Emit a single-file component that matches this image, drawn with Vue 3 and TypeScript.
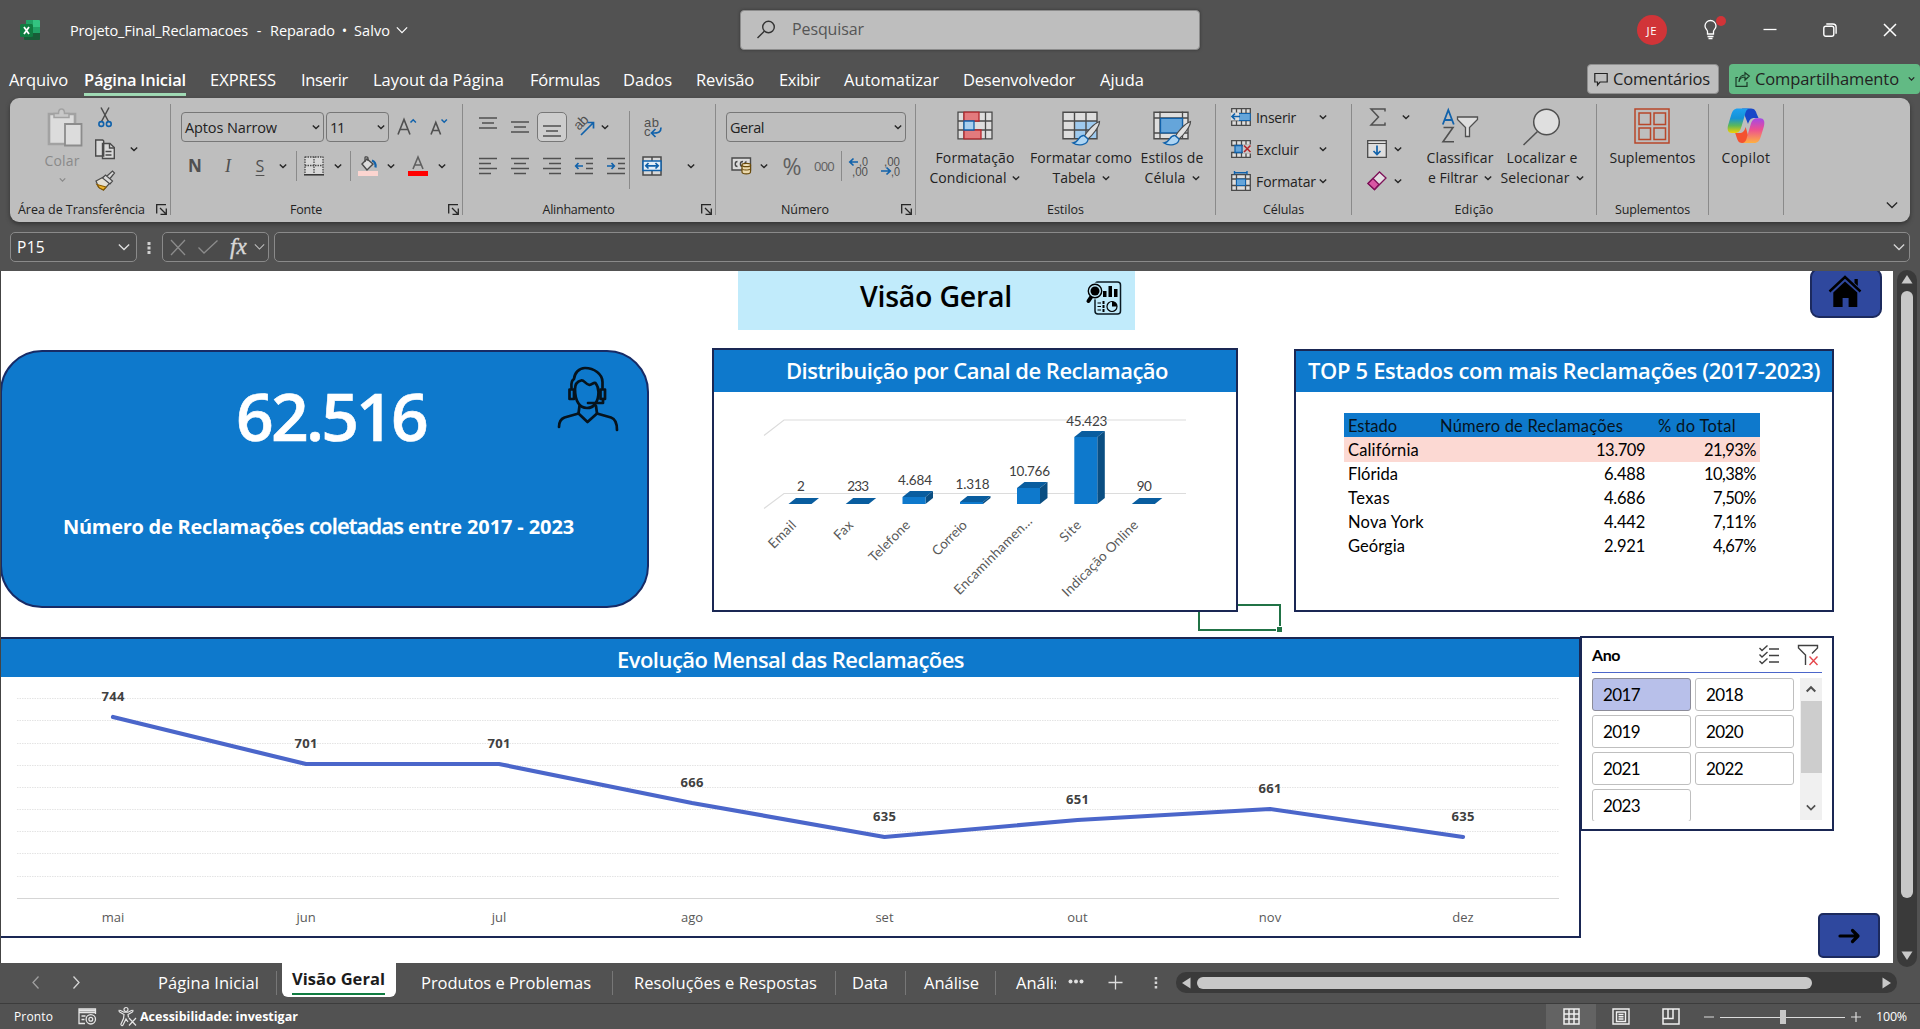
<script setup lang="ts">
import { h } from 'vue'
import type { Directive, FunctionalComponent } from 'vue'

// Tracks a label so that it takes up the given width in pixels.
const vFit: Directive<HTMLElement, number> = {
  mounted(el, { value }) {
    const count = (el.textContent ?? '').length
    const natural = el.getBoundingClientRect().width
    if (count > 1) el.style.letterSpacing = `${((value - natural) / count).toFixed(3)}px`
  },
}

const Chev: FunctionalComponent<{ w?: number; c?: string; s?: number }> = (p) => {
  const w = p.w ?? 8
  return h('svg', { width: w, height: w / 2 + 2, viewBox: `-1 -1 ${w + 2} ${w / 2 + 2}`, style: 'flex:none;display:block' }, [
    h('path', { d: `M0 0L${w / 2} ${w / 2}L${w} 0`, fill: 'none', stroke: p.c ?? '#262626', 'stroke-width': p.s ?? 1.7 }),
  ])
}
Chev.props = ['w', 'c', 's']

const Launcher: FunctionalComponent = () =>
  h('svg', { class: 'launcher', width: 11, height: 11, viewBox: '0 0 11 11' }, [
    h('path', { d: 'M.7 9.5V.7H10M4 4l5.5 5.5M10.3 4.500V10.300H4.500', fill: 'none', stroke: '#262626', 'stroke-width': 1.3 }),
  ])

interface Label { text: string; w: number }
interface Tab extends Label { gap: number; active?: boolean }
const tabs: Tab[] = [
  { text: 'Arquivo', w: 59, gap: 9 },
  { text: 'Página Inicial', w: 102, gap: 16, active: true },
  { text: 'EXPRESS', w: 66, gap: 24 },
  { text: 'Inserir', w: 47, gap: 25 },
  { text: 'Layout da Página', w: 131, gap: 25 },
  { text: 'Fórmulas', w: 70, gap: 26 },
  { text: 'Dados', w: 49, gap: 23 },
  { text: 'Revisão', w: 58, gap: 24 },
  { text: 'Exibir', w: 41, gap: 25 },
  { text: 'Automatizar', w: 95, gap: 24 },
  { text: 'Desenvolvedor', w: 112, gap: 24 },
  { text: 'Ajuda', w: 44, gap: 25 },
]

const alignRows = [
  { id: 'l', x: [0, 0, 0, 0], e: [18, 12, 18, 12] },
  { id: 'c', x: [0, 3, 0, 3], e: [18, 15, 18, 15] },
  { id: 'r', x: [0, 6, 0, 6], e: [18, 18, 18, 18] },
]

interface Bar { name: string; value: string; x: number; top: number; labelY: number; endX: number; endY: number; len: number; vw: number }
const bars: Bar[] = [
  { name: 'Email', value: '2', x: 788.5, top: 504, labelY: 491, endX: 797, endY: 526, len: 33, vw: 7 },
  { name: 'Fax', value: '233', x: 845.700, top: 504, labelY: 491, endX: 854, endY: 526, len: 21, vw: 22 },
  { name: 'Telefone', value: '4.684', x: 902.5, top: 497, labelY: 485, endX: 911, endY: 526, len: 52, vw: 34 },
  { name: 'Correio', value: '1.318', x: 960, top: 502, labelY: 489, endX: 968, endY: 526, len: 43, vw: 34 },
  { name: 'Encaminhamen...', value: '10.766', x: 1017, top: 488, labelY: 476, endX: 1033, endY: 522, len: 104, vw: 41 },
  { name: 'Site', value: '45.423', x: 1074.300, top: 437, labelY: 426, endX: 1082, endY: 526, len: 24, vw: 41 },
  { name: 'Indicação Online', value: '90', x: 1131.800, top: 504, labelY: 491, endX: 1139, endY: 526, len: 101, vw: 15 },
]

const states = [
  { n: 'Califórnia', w: 71, q: '13.709', qw: 49, p: '21,93%', pw: 52 },
  { n: 'Flórida', w: 50, q: '6.488', qw: 41, p: '10,38%', pw: 52 },
  { n: 'Texas', w: 42, q: '4.686', qw: 41, p: '7,50%', pw: 43 },
  { n: 'Nova York', w: 76, q: '4.442', qw: 41, p: '7,11%', pw: 43 },
  { n: 'Geórgia', w: 57, q: '2.921', qw: 41, p: '4,67%', pw: 43 },
]

const months = [
  { m: 'mai', v: 744, x: 113, y: 717, ly: 701 },
  { m: 'jun', v: 701, x: 306, y: 764, ly: 748 },
  { m: 'jul', v: 701, x: 499, y: 764, ly: 748 },
  { m: 'ago', v: 666, x: 692, y: 803, ly: 787 },
  { m: 'set', v: 635, x: 884.5, y: 837, ly: 821 },
  { m: 'out', v: 651, x: 1077.5, y: 820, ly: 804 },
  { m: 'nov', v: 661, x: 1270, y: 809, ly: 793 },
  { m: 'dez', v: 635, x: 1463, y: 837, ly: 821 },
]
const linePoints = months.map((p) => `${p.x},${p.y}`).join(' ')
const gridYs = [698.5, 720.5, 743.5, 765.5, 787.5, 809.5, 831.5, 853.5, 876.5]
const years = [2017, 2018, 2019, 2020, 2021, 2022, 2023]
</script>

<template>
  <div class="app">
    <header class="titlebar">
      <svg class="xl" width="20" height="20" viewBox="20 20 20 20">
        <path fill="#21a366" d="M26 20h7v7h-7z" /><path fill="#33c481" d="M33 20h6a1 1 0 011 1v6h-7z" />
        <path fill="#107c41" d="M26 27h7v6h-7z" /><path fill="#21a366" d="M33 27h7v6h-7z" />
        <path fill="#185c37" d="M24 33h16v6a1 1 0 01-1 1H25a1 1 0 01-1-1z" /><rect x="20" y="24" width="13" height="13" rx="1.500" fill="#107c41" />
        <path d="M24 27l5 7M29 27l-5 7" stroke="#fff" stroke-width="1.800" />
      </svg>
      <div class="doc">
        <span v-fit="178">Projeto_Final_Reclamacoes</span><span class="dash">-</span>
        <span v-fit="65">Reparado</span><span class="dot">•</span><span v-fit="36">Salvo</span>
        <Chev :w="12" c="#fff" :s="1.4" />
      </div>
      <div class="search">
        <svg width="19" height="19" viewBox="757 20 19 19" fill="none" stroke="#333" stroke-width="1.400"><circle cx="768.500" cy="27" r="5.800" /><path d="M764.300 31.200L757.500 38" /></svg>
        <span v-fit="72">Pesquisar</span>
      </div>
      <div class="avatar"><span v-fit="11">JE</span></div>
      <svg class="bulb" width="24" height="26" viewBox="1703 13 24 26" fill="none" stroke="#fff" stroke-width="1.300">
        <path d="M1707.500 33v-2.500c0-1.500-2.500-2.500-2.500-5.500a5.500 5.500 0 0111 0c0 3-2.500 4-2.500 5.500V33zM1707.500 35.500h6M1708.500 37.500h4" /><circle cx="1721" cy="20" r="5" fill="#d13438" stroke="none" />
      </svg>
      <div class="wins">
        <svg width="14" height="14" viewBox="0 0 14 14"><path d="M.5 6.500h13" stroke="#fff" stroke-width="1.300" /></svg>
        <svg width="14" height="14" viewBox="0 0 14 14" fill="none" stroke="#fff" stroke-width="1.400"><rect x=".8" y="3.300" width="10" height="10" rx="2" /><path d="M3.300 1h6.500a3.300 3.300 0 013.300 3.300v6.500" /></svg>
        <svg width="14" height="14" viewBox="0 0 14 14"><path d="M1 1l12 12M13 1L1 13" stroke="#fff" stroke-width="1.500" /></svg>
      </div>
    </header>

    <nav class="tabs">
      <span v-for="t in tabs" :key="t.text" class="tab" :class="{ on: t.active }" :style="{ marginLeft: t.gap + 'px', width: t.w + 'px' }"><span v-fit="t.w">{{ t.text }}</span></span>
      <button class="cbtn comments">
        <svg width="14" height="14" viewBox="0 0 14 14" fill="none" stroke="#222" stroke-width="1.200"><path d="M.8 1.500h12.400v8.500H6l-2.500 3v-3H.8z" /></svg>
        <span v-fit="97">Comentários</span>
      </button>
      <button class="cbtn share">
        <svg width="15" height="15" viewBox="0 0 15 15" fill="none" stroke="#1c3a28" stroke-width="1.200"><path d="M3 5.500H1v8.800h11V10M4 10c.5-4 3-5 6-5V8l4.300-4L10 .800V3C6 3 4 6 4 10z" /></svg>
        <span v-fit="144">Compartilhamento</span><Chev :w="7" />
      </button>
    </nav>

    <section class="ribbon">
      <div class="group clip">
        <div class="body">
          <div class="paste">
            <svg width="34" height="38" viewBox="48 108 34 38" fill="#dcdcdc" stroke="#a2a2a2" stroke-width="1.800"><path d="M49 114h26v30H49z" stroke-width="2.600" /><path d="M54 117.500v-4h4.500c0-6 6-6 6 0H69v4z" fill="#c8c8c8" stroke-width="1.500" /><path d="M65 124h16.500v21.500H65z" stroke="#8c8c8c" /></svg>
            <span v-fit="35">Colar</span><Chev :w="7" c="#8a8a8a" />
          </div>
          <div class="clipcol">
            <div class="crow"><svg width="20" height="20" viewBox="95 107 20 20" fill="none"><path d="M101 107.500l7.500 14M109 107.500l-7.500 14" stroke="#4a4a4a" stroke-width="1.500" /><g stroke="#1162ab" stroke-width="1.600"><circle cx="101.300" cy="124" r="2.400" /><circle cx="108.800" cy="124" r="2.400" /></g></svg></div>
            <div class="crow"><svg width="20" height="20" viewBox="95 139 20 20" fill="#d8d8d8" stroke="#4a4a4a" stroke-width="1.400"><path d="M95.700 140h7l1 1v15h-8zM102.500 143.500h7.500l4.300 4v11h-11.800z" /><path d="M109.500 143.500v4.500h4.500M105.500 151.500h6M105.500 155h6" fill="none" /></svg><Chev /></div>
            <div class="crow"><svg width="20" height="20" viewBox="95 171 20 20" stroke="#4a4a4a" stroke-width="1.200"><path d="M96 181l7.500-4 6 6.500-6 6.500-5-3z" fill="#e4dfd2" /><path d="M97 184.500l9 2.500-2.500 3-4-2z" fill="#efb42c" stroke="#8a5c00" /><path d="M102.500 178l3-3 7 6-2.500 3zM107 176l5.500-5 2 2-4.500 5.500" fill="#d8d8d8" /></svg></div>
          </div>
        </div>
        <footer><span v-fit="127">Área de Transferência</span><Launcher /></footer>
      </div>

      <div class="group font">
        <div class="body two">
          <div class="row f1">
            <div class="combo"><span v-fit="92">Aptos Narrow</span><Chev /></div>
            <div class="combo"><span v-fit="14">11</span><Chev /></div>
            <svg width="20" height="18" viewBox="397 116.500 20 18" fill="none"><path d="M398 133l6-15 6 15M400.200 128h7.600" stroke="#505050" stroke-width="1.600" /><path d="M410.500 121l2.700-2.700 2.700 2.700" stroke="#1162ab" stroke-width="1.500" /></svg>
            <svg width="18" height="18" viewBox="431 116.500 18 18" fill="none"><path d="M432 133l4.800-12 4.800 12M433.700 129h6.200" stroke="#505050" stroke-width="1.600" /><path d="M442.500 118l2.700 2.700 2.700-2.700" stroke="#1162ab" stroke-width="1.500" /></svg>
          </div>
          <div class="row f2">
            <b>N</b><i>I</i><u>S</u><Chev /><hr />
            <svg width="20" height="20" viewBox="0 0 20 20"><path fill="#d8d8d8" d="M1 1h18v17H1z" /><path d="M1 .500V18M10 .500V18M19 .500V18M1 1h18M1 9.500h18" stroke="#4a4a4a" stroke-width="1.300" stroke-dasharray="1.500 1" /><path d="M0 18.800h20" stroke="#333" stroke-width="1.500" /></svg>
            <Chev /><hr />
            <svg width="20" height="20" viewBox="0 0 20 20" fill="none"><path d="M4 8l5-5 6 5-6 6z" fill="#dcdcdc" stroke="#4a4a4a" stroke-width="1.400" /><path d="M7 6V1.500c0-1 3-1 3 .500v3" stroke="#4a4a4a" stroke-width="1.300" /><path d="M14 4.500c3 1 4 3 3.500 7" stroke="#1162ab" stroke-width="2.200" /><path fill="#fcd5d0" d="M0 15h20v5H0z" /></svg>
            <Chev />
            <svg width="20" height="20" viewBox="0 0 20 20"><path d="M5 13L10 1l5 12M6.700 9h6.600" fill="none" stroke="#606060" stroke-width="1.600" /><path fill="#f00" d="M0 15h20v5H0z" /></svg>
            <Chev />
          </div>
        </div>
        <footer class="l"><span v-fit="32">Fonte</span><Launcher /></footer>
      </div>

      <div class="group align">
        <div class="body">
          <div class="al">
            <div class="row a1">
              <svg class="up" width="18" height="13" viewBox="0 0 18 13"><path d="M0 1h18M3 6h12M0 11h18" /></svg>
              <svg width="18" height="13" viewBox="0 0 18 13"><path d="M0 1h18M3 6h12M0 11h18" /></svg>
              <div class="pressed"><svg width="18" height="13" viewBox="0 0 18 13"><path d="M0 1h18M3 6h12M0 11h18" /></svg></div>
              <svg width="20" height="20" viewBox="574 117 20 20"><text x="579" y="131" font-size="14" transform="rotate(-45 579 131)" textLength="15" class="gl">ab</text><path d="M581 135l12-12M587.500 122.500h6v6" class="bl" /></svg>
              <Chev />
            </div>
            <div class="row a2">
              <svg v-for="a in alignRows" :key="a.id" width="18" height="18" viewBox="0 0 18 18"><path v-for="(s, i) in a.x" :key="i" :d="`M${s} ${1.500 + i * 5}H${a.e[i]}`" /></svg>
              <svg width="18" height="18" viewBox="0 0 18 18"><path d="M0 1.500h18M11 6.500h7M11 11.500h7M0 16.500h18" /><path d="M8 9H1M3.500 6L.7 9l2.800 3" class="bl" /></svg>
              <svg width="18" height="18" viewBox="0 0 18 18"><path d="M0 1.500h18M11 6.500h7M11 11.500h7M0 16.500h18" /><path d="M0 9h7M4.500 6l2.800 3-2.800 3" class="bl" /></svg>
            </div>
          </div>
          <div class="ar">
            <div class="row a3"><svg width="20" height="22" viewBox="653 116 20 22"><text x="655" y="127" font-size="13" textLength="15" class="gl">ab</text><text x="655" y="136" font-size="13" class="gl">c</text><path d="M672 127.500c0 4.500-2 5.500-9 5.500M666.500 129l-4 4 4 4" class="bl" /></svg></div>
            <div class="row a3"><svg width="20" height="20" viewBox="0 0 20 20"><path d="M1 1h18v18H1zM10 1v4M10 15v4" fill="#d8d8d8" stroke="#4a4a4a" stroke-width="1.500" /><path d="M1 5h18v9.500H1z" fill="#e4eef6" stroke="#1162ab" stroke-width="1.500" /><path d="M4 9.800h12M6.500 7L3.800 9.800l2.700 2.700M13.500 7l2.700 2.800-2.700 2.700" class="bl" /></svg><Chev /></div>
          </div>
        </div>
        <footer class="l"><span v-fit="72">Alinhamento</span><Launcher /></footer>
      </div>

      <div class="group num">
        <div class="body two">
          <div class="combo"><span v-fit="34">Geral</span><Chev /></div>
          <div class="row n2">
            <svg width="21" height="18" viewBox="731 160 21 18"><path d="M732 161h18.500v12H732z" fill="#dcdcdc" stroke="#4a4a4a" stroke-width="1.400" /><path d="M737.500 164.500c-3 0-3 5 0 5M743 164.500c-3.500 0-3.500 5 0 5M746.500 164.500c-2.500 1-2 4-1 5" fill="none" stroke="#4a4a4a" stroke-width="1.400" /><path d="M742 168v7c0 2.500 8.500 2.500 8.500 0v-7" fill="#ebd9ad" stroke="#6a4b0b" stroke-width="1.200" /><ellipse cx="746.300" cy="168" rx="4.300" ry="1.700" fill="#f0e2be" stroke="#6a4b0b" stroke-width="1.200" /><path d="M742 171.500c0 2 8.500 2 8.500 0" fill="none" stroke="#6a4b0b" /></svg>
            <Chev /><span class="pct">%</span><span class="zeros" v-fit="20">000</span><hr />
            <svg width="20" height="20" viewBox="849 156 20 20"><text x="859" y="165.500" font-size="12" textLength="9" lengthAdjust="spacingAndGlyphs" class="gl">,0</text><text x="852" y="175.500" font-size="12" textLength="16" lengthAdjust="spacingAndGlyphs" class="gl">,00</text><path d="M858 162h-8M853.500 158.500l-3.700 3.500 3.700 3.500" class="bl" /></svg>
            <svg width="20" height="20" viewBox="881 156 20 20"><text x="884" y="165.500" font-size="12" textLength="16" lengthAdjust="spacingAndGlyphs" class="gl">,00</text><text x="891" y="175.500" font-size="12" textLength="9" lengthAdjust="spacingAndGlyphs" class="gl">,0</text><path d="M881 171h9M886.500 167.500l3.700 3.500-3.700 3.500" class="bl" /></svg>
          </div>
        </div>
        <footer class="l"><span v-fit="48">Número</span><Launcher /></footer>
      </div>

      <div class="group styles">
        <div class="body">
          <div class="big b1">
            <svg width="36" height="29" viewBox="957.500 111.500 36 29"><path d="M958.500 112.700h34v26.600h-34z" fill="#dedede" /><path d="M958.500 112.700h34v26.600h-34zM958.500 121.500h34M958.500 130.500h34M964.500 112v27M986 112v27" fill="none" stroke="#4a4a4a" stroke-width="1.300" /><path d="M964.500 112.700h15v8.800h-15zM964.500 130.500h17v8.800h-17z" fill="#e37a7d" stroke="#b5282e" stroke-width="1.300" /><path d="M964.500 121.500h10v9h-10z" fill="#aacfee" stroke="#1162ab" stroke-width="1.300" /></svg>
            <span v-fit="79">Formatação</span><p><span v-fit="77">Condicional</span><Chev /></p>
          </div>
          <div class="big b2">
            <svg width="39" height="36" viewBox="1063 111.500 39 36"><path d="M1064 112.700h34v26.600h-34z" fill="#dedede" /><path d="M1076 121.500h22v18h-22z" fill="#9fcaee" /><path d="M1064 112.700h34v26.600h-34zM1064 121.500h34M1064 130.500h34M1075.500 112v27M1087 112v27" fill="none" stroke="#4a4a4a" stroke-width="1.400" /><path d="M1100.500 122c-6 2-13 11-15 14.500l3.500 3c4-3.500 11.500-12 11.500-17.500z" fill="#dedede" stroke="#4a4a4a" stroke-width="1.200" /><path d="M1085 136c-6-.500-4.500 7-11 7.500 5 3.500 15 2 15-4z" fill="#aed5f3" stroke="#1162ab" stroke-width="1.300" /></svg>
            <span v-fit="102">Formatar como</span><p><span v-fit="43">Tabela</span><Chev /></p>
          </div>
          <div class="big b3">
            <svg width="39" height="36" viewBox="1153 111.500 39 36"><path d="M1154 112.700h34v26.600h-34z" fill="#dedede" stroke="#4a4a4a" stroke-width="1.400" /><path d="M1154 118.500h34M1160 112v27M1182.500 112v27M1154 133.500h34" stroke="#4a4a4a" stroke-width="1.300" /><path d="M1160.500 118.800h22v14.500h-22z" fill="#65a5da" stroke="#1162ab" stroke-width="1.300" /><path d="M1190.500 122c-6 2-13 11-15 14.500l3.500 3c4-3.500 11.500-12 11.500-17.500z" fill="#dedede" stroke="#4a4a4a" stroke-width="1.200" /><path d="M1175 136c-6-.500-4.500 7-11 7.500 5 3.500 15 2 15-4z" fill="#aed5f3" stroke="#1162ab" stroke-width="1.300" /></svg>
            <span v-fit="63">Estilos de</span><p><span v-fit="41">Célula</span><Chev /></p>
          </div>
        </div>
        <footer><span v-fit="37">Estilos</span></footer>
      </div>

      <div class="group cells">
        <div class="rows">
          <div class="crow"><svg width="20" height="18" viewBox="0 0 20 18"><path d="M.7.7h18.600v16.600H.7zM.7 5.500h18.600M.7 12.500h18.600M5.500.7v16.600M10.500.7v16.600M15 .7v16.600" fill="#dedede" stroke="#4a4a4a" stroke-width="1.300" /><path d="M7 5.500h12.300v7H7z" fill="#65a5da" stroke="#1162ab" /><path d="M0 4.500h8v8H0z" fill="#dedede" /><path d="M9 8.500H1M4 5.500l-3 3 3 3" class="bl" /></svg><span v-fit="40">Inserir</span><Chev /></div>
          <div class="crow"><svg width="20" height="18" viewBox="0 0 20 18"><path d="M.7.7h18.600v4.800H.7zM.7 12.500h18.600v4.800H.7zM5.500.7v16.600M10.500.7v16.600M15 .7v16.600" fill="#dedede" stroke="#4a4a4a" stroke-width="1.300" /><path d="M4 5.500h7v7H4z" fill="#65a5da" stroke="#1162ab" stroke-width="1.300" /><path d="M12 4.500h8v9h-8z" fill="#c6c6c6" /><path d="M13 5.500l6.500 6.500M19.500 5.500L13 12" stroke="#b3262b" stroke-width="1.600" /></svg><span v-fit="43">Excluir</span><Chev /></div>
          <div class="crow"><svg width="20" height="20" viewBox="0 0 20 20"><path d="M.7 3.700h18.600v15.600H.7zM.7 8h18.600M.7 14.500h18.600M5.500 3.700v15.600M14.500 3.700v15.600" fill="#dedede" stroke="#4a4a4a" stroke-width="1.300" /><path d="M5.500 8h9v6.500h-9z" fill="#65a5da" stroke="#1162ab" /><path d="M3.500 0v3.500M16 0v3.500M3.500 1.700H16" stroke="#1162ab" stroke-width="1.400" /></svg><span v-fit="60">Formatar</span><Chev /></div>
        </div>
        <footer><span v-fit="41">Células</span></footer>
      </div>

      <div class="group edit">
        <div class="body">
          <div class="rows">
            <div class="crow first"><svg width="18" height="18" viewBox="0 0 18 18"><path d="M16 3.500V1H2l7.500 8L2 17h14v-2.500" fill="none" stroke="#505050" stroke-width="1.500" /></svg><Chev /></div>
            <div class="crow"><svg width="20" height="18" viewBox="0 0 20 18"><path d="M.7.700h18.600v16.600H.7z" fill="#dedede" stroke="#4a4a4a" stroke-width="1.300" /><path d="M.7 3.500h18.600" stroke="#4a4a4a" /><path d="M10 5.500v9M6.500 11l3.500 3.500 3.500-3.500" class="bl" /></svg><Chev /></div>
            <div class="crow"><svg width="20" height="20" viewBox="0 0 20 20" stroke="#7d1058" stroke-width="1.300"><path d="M1 12.500L12.500 1l6.500 6L7.500 18.500z" fill="#e4dfe3" /><path d="M1 12.500l5-5 6 6-4.500 5z" fill="#d957a4" /></svg><Chev /></div>
          </div>
          <div class="big e1">
            <svg width="36" height="36" viewBox="1442 108.500 36 36"><path d="M1442.800 125l5.500-14.500 5.500 14.500M1444.700 120.500h7.200" fill="none" stroke="#1162ab" stroke-width="1.800" /><path d="M1443.500 128h9.500l-10 14.300h11" fill="none" stroke="#505050" stroke-width="1.600" /><path d="M1457.500 117.500h20v2.500l-8 8v9h-4v-9l-8-8z" fill="#dedede" stroke="#505050" stroke-width="1.300" /></svg>
            <span v-fit="67">Classificar</span><p><span v-fit="50">e Filtrar</span><Chev /></p>
          </div>
          <div class="big e2">
            <svg width="38" height="38" viewBox="1523 107.500 38 38" stroke="#505050" stroke-width="1.500"><circle cx="1546.500" cy="121.500" r="12.800" fill="#dfdfdf" /><path d="M1537.500 131l-14 13.500" /></svg>
            <span v-fit="71">Localizar e</span><p><span v-fit="69">Selecionar</span><Chev /></p>
          </div>
        </div>
        <footer><span v-fit="39">Edição</span></footer>
      </div>

      <div class="group addin">
        <div class="body"><div class="big">
          <svg width="36" height="36" viewBox="0 0 36 36" fill="none" stroke="#b8472a" stroke-width="1.500"><path d="M1 1h34v34H1zM5 5h11.500v11.500H5zM20 5h11.500v11.500H20zM5 20h11.500v11.500H5zM20 20h11.500v11.500H20z" /></svg>
          <span v-fit="86">Suplementos</span>
        </div></div>
        <footer><span v-fit="75">Suplementos</span></footer>
      </div>

      <div class="group copilot">
        <div class="body"><div class="big">
          <svg width="38" height="36" viewBox="1727 108.500 38 36">
            <defs>
              <linearGradient id="ga" x1="0" y1="0" x2="0" y2="1"><stop offset="0" stop-color="#1ea0f0" /><stop offset=".4" stop-color="#1593d6" /><stop offset=".7" stop-color="#5cb85a" /><stop offset="1" stop-color="#f5d000" /></linearGradient>
              <linearGradient id="gb" x1="0" y1="0" x2="0" y2="1"><stop offset="0" stop-color="#a348e8" /><stop offset=".45" stop-color="#ec4f92" /><stop offset="1" stop-color="#ffb040" /></linearGradient>
            </defs>
            <path d="M1742 109h9c4 0 5 3 6 6l1.500 3.500h-4c-4 0-5 2-6.500 6z" fill="#1747c8" />
            <path d="M1750 143.500h-8c-3.500 0-4.500-3-5.500-6l-1.300-4h4c4 0 5-2 6.500-6z" fill="#f4512f" />
            <path d="M1738 109h13c-4 0-5 2-6 6l-3.500 12c-1.300 4.500-3 6.500-6.500 6.500h-3c-4 0-5-3-4-7.500l3-10c1.300-4.500 3-7 7-7z" fill="url(#ga)" />
            <path d="M1754 143.500h-13c4 0 5-2 6-6l3.500-12c1.300-4.500 3-6.800 6.500-6.800h3c4 0 5 3.300 4 7.800l-3 10c-1.300 4.500-3 7-7 7z" fill="url(#gb)" />
          </svg>
          <span v-fit="49">Copilot</span>
        </div></div>
      </div>
      <div class="collapse"><Chev :w="12" :s="1.500" /></div>
    </section>

    <div class="fbar">
      <div class="fbox name"><span v-fit="28">P15</span><Chev :w="12" c="#e0e0e0" :s="1.500" /></div>
      <svg class="dots" width="4" height="14" viewBox="0 0 4 14"><path d="M.5 1h3v3h-3zM.5 5.500h3v3h-3zM.5 10h3v3h-3z" fill="#d0d0d0" /></svg>
      <div class="fbox fx">
        <svg width="16" height="15" viewBox="0 0 16 15"><path d="M1 0l14 15M15 0L1 15" stroke="#8c8c8c" stroke-width="1.300" /></svg>
        <svg width="20" height="14" viewBox="0 0 20 14"><path d="M.5 7.500l5.500 5.500L19.500.5" fill="none" stroke="#8c8c8c" stroke-width="1.300" /></svg>
        <em>fx</em><Chev :w="11" c="#bdbdbd" :s="1.300" />
      </div>
      <div class="fbox input"><Chev :w="12" c="#d5d5d5" :s="1.500" /></div>
    </div>

    <main class="work">
      <div class="sheet">
        <div class="cursor"></div>
        <div class="line1">
          <div class="banner">
            <span v-fit="152">Visão Geral</span>
            <svg width="36" height="36" viewBox="1086 280 36 36"><rect x="1095" y="282" width="25.500" height="32" rx="3" fill="none" stroke="#0b1a22" stroke-width="1.500" /><circle cx="1095" cy="291" r="8.500" fill="#c1ebfb" /><path d="M1092.500 295l-4 6" stroke="#000" stroke-width="4" stroke-linecap="round" /><circle cx="1095" cy="291" r="6.700" fill="#c1ebfb" stroke="#000" stroke-width="1.400" /><circle cx="1095" cy="291" r="4.500" /><path d="M1103 291h3.500v6h-3.500zM1108.500 286h3.500v11h-3.500zM1114 289h3.500v8h-3.500z" /><path d="M1097.500 303h3.500M1097.500 306.500h3.500M1097.500 310h3.500" stroke="#000" stroke-width="1.100" /><path d="M1103.500 301v11" stroke="#000" stroke-width="2" stroke-dasharray="3 1" /><circle cx="1112" cy="306.500" r="5" fill="none" stroke="#000" stroke-width="1.200" /><path d="M1112 306.500v-5a5 5 0 015 5z" /></svg>
          </div>
          <div class="home"><svg width="34" height="34" viewBox="1827 274 34 34"><path d="M1844 281.500l-11.700 11V307h9.300v-9h6v9h8.700v-14.500z" /><path d="M1828.500 291.500L1844 277l15.500 14.500" fill="none" stroke="#000" stroke-width="2.400" /><path d="M1853.500 279h3.300v7l-3.300-3z" /></svg></div>
        </div>

        <div class="line2">
          <div class="kpi">
            <svg width="64" height="68" viewBox="557 366 64 68" fill="none" stroke="#06131c" stroke-width="2.700" stroke-linejoin="round" stroke-linecap="round">
              <path d="M572.500 388c-.500-5 .500-8 2.500-9 .500-6 5-11 11-11 9 0 17.500 6 17.500 14v6" /><path d="M570.500 389.500h4.500v9.500h-4.500zM601.500 389.500h4.500v9.500h-4.500z" />
              <path d="M576 389c0-5 2-7.500 6-8.500 3-1 4 3.500 8.500 4.500 3-.500 4-3 6-2 2 2.500 3 5 3 9 0 9-4 16-11.500 16S576 401 576 389z" /><path d="M604 399v4h-15M580.500 406l-1 7.500 9 8.500 9.500-8.500-1-7.500" /><path d="M579.500 413.500l-14 4c-4 1.500-5.500 4-5.500 9.500M598 413.500l14 4c4.500 1.500 6 5 6 12.500" />
            </svg>
            <strong v-fit="190">62.516</strong>
            <p><b v-fit="246">Número de Reclamações </b><span v-fit="99">coletadas </span><b v-fit="166">entre 2017 - 2023</b></p>
          </div>

          <div class="panel channel">
            <h3><span v-fit="382">Distribuição por Canal de Reclamação</span></h3>
            <svg width="522" height="218" viewBox="714 392 522 218">
              <path d="M764 435.500L784 420h402M764 508.500L784 493.500h402" fill="none" stroke="#dcdcdc" stroke-width="1.200" />
              <g v-for="b in bars" :key="b.name">
                <path :d="`M${b.x} ${b.top}l7.500-6h23l-7.500 6z`" fill="#095d9f" /><path :d="`M${b.x + 23} ${b.top}l7.500-6V498l-7.500 6z`" fill="#0a4e82" />
                <rect :x="b.x" :y="b.top" width="23" :height="504 - b.top" fill="#0e79cc" />
                <text :x="b.x + 12.500" :y="b.labelY" :textLength="b.vw" text-anchor="middle" class="bv">{{ b.value }}</text>
                <text :x="b.endX" :y="b.endY" :textLength="b.len" text-anchor="end" :transform="`rotate(-45 ${b.endX} ${b.endY})`" class="bn">{{ b.name }}</text>
              </g>
            </svg>
          </div>

          <div class="panel top">
            <h3><span v-fit="512">TOP 5 Estados com mais Reclamações (2017-2023)</span></h3>
            <div class="table">
              <div class="tr th"><span class="c1"><span v-fit="49">Estado</span></span><span class="c2"><span v-fit="183">Número de Reclamações</span></span><span class="c3"><span v-fit="78">% do Total</span></span></div>
              <div v-for="s in states" :key="s.n" class="tr"><span class="c1"><span v-fit="s.w">{{ s.n }}</span></span><span class="c2"><span v-fit="s.qw">{{ s.q }}</span></span><span class="c3"><span v-fit="s.pw">{{ s.p }}</span></span></div>
            </div>
          </div>
        </div>

        <div class="line3">
          <div class="panel trend">
            <h3><span v-fit="347">Evolução Mensal das Reclamações</span></h3>
            <svg width="1578" height="259" viewBox="1 677 1578 259">
              <path v-for="y in gridYs" :key="y" :d="`M17 ${y}H1559`" stroke="#e4e4e4" stroke-dasharray="1.500 1" />
              <path d="M17 898.500H1559" stroke="#d5d5d5" />
              <polyline :points="linePoints" fill="none" stroke="#4b66ca" stroke-width="4.200" stroke-linecap="round" stroke-linejoin="round" />
              <g v-for="p in months" :key="p.m"><text :x="p.x" :y="p.ly" textLength="23" text-anchor="middle" class="lv">{{ p.v }}</text><text :x="p.x" y="922" text-anchor="middle" class="lm">{{ p.m }}</text></g>
            </svg>
          </div>
          <div class="side">
            <div class="slicer">
              <header>
                <b v-fit="28">Ano</b>
                <svg width="21" height="20" viewBox="1759 644 21 20" fill="none" stroke="#404040" stroke-width="1.400"><path d="M1769 649h10M1769 655.500h10M1769 662h10M1759.500 648l2.500 2.500 5.500-5M1759.500 654.500l2.500 2.500 5.500-5M1759.500 661l2.500 2.500 5.500-5" /></svg>
                <svg width="22" height="22" viewBox="1797 644 22 22" fill="none"><path d="M1805.500 665v-10l-7-7v-2.500h19v2.500l-5.500 5.500" stroke="#404040" stroke-width="1.400" /><path d="M1809.500 656.500l8 8.500M1817.500 656.500l-8 8.500" stroke="#e5484d" stroke-width="1.400" /></svg>
              </header>
              <div class="sbody">
                <div class="years"><span v-for="y in years" :key="y" :class="{ sel: y === 2017 }"><span v-fit="37">{{ y }}</span></span></div>
                <div class="sscroll"><svg width="10" height="6" viewBox="0 0 10 6"><path d="M.7 5.500L5 1.200l4.300 4.300" fill="none" stroke="#505050" stroke-width="2" /></svg><div></div><Chev :w="10" c="#505050" :s="2" /></div>
              </div>
            </div>
            <div class="next"><svg width="24" height="16" viewBox="0 0 24 16"><path d="M3 8h17M15.500 2.500L21 8l-5.500 5.500" fill="none" stroke="#000" stroke-width="3.200" stroke-linecap="round" stroke-linejoin="round" /></svg></div>
          </div>
        </div>
      </div>
      <div class="vscroll"><svg width="12" height="9" viewBox="0 0 12 9"><path d="M6 0l5.500 8.500H.5z" fill="#c8c8c8" /></svg><div></div><svg width="12" height="9" viewBox="0 0 12 9"><path d="M6 9L.5.500h11z" fill="#c8c8c8" /></svg></div>
    </main>

    <div class="sheets">
      <svg class="nav1" width="7" height="13" viewBox="0 0 7 13"><path d="M6.500.5l-5.500 6 5.500 6" fill="none" stroke="#a0a0a0" stroke-width="1.300" /></svg>
      <svg class="nav2" width="7" height="13" viewBox="0 0 7 13"><path d="M.5.500l5.500 6-5.500 6" fill="none" stroke="#d5d5d5" stroke-width="1.300" /></svg>
      <span class="st s1"><span v-fit="101">Página Inicial</span></span>
      <span class="active"><span v-fit="93">Visão Geral</span></span>
      <span class="st s2"><span v-fit="170">Produtos e Problemas</span></span>
      <span class="st s3"><span v-fit="183">Resoluções e Respostas</span></span>
      <span class="st s4"><span v-fit="36">Data</span></span>
      <span class="st s5"><span v-fit="55">Análise</span></span>
      <span class="cut"><span v-fit="55">Análise</span></span>
      <svg class="more" width="16" height="5" viewBox="0 0 16 5" fill="#e0e0e0"><circle cx="2.500" cy="2.500" r="2" /><circle cx="8" cy="2.500" r="2" /><circle cx="13.500" cy="2.500" r="2" /></svg>
      <svg class="plus" width="15" height="15" viewBox="0 0 15 15"><path d="M7.500.5v14M.5 7.500h14" stroke="#ddd" stroke-width="1.300" /></svg>
      <svg class="vd" width="4" height="14" viewBox="0 0 4 14"><path d="M.7 1h2.500v2.500H.7zM.7 5.500h2.500V8H.7zM.7 10h2.500v2.500H.7z" fill="#d5d5d5" /></svg>
      <div class="hscroll"><svg width="9" height="12" viewBox="0 0 9 12"><path d="M0 6L8.500.5v11z" fill="#c8c8c8" /></svg><div></div><svg width="9" height="12" viewBox="0 0 9 12"><path d="M9 6L.500.500v11z" fill="#c8c8c8" /></svg></div>
    </div>

    <footer class="status">
      <span class="ready" v-fit="39">Pronto</span>
      <svg class="rec" width="19" height="17" viewBox="0 0 19 17" fill="none" stroke="#e5e5e5" stroke-width="1.300"><path d="M7 15.500H1V1h16.500v5M1 4.500h16.500M3.500 8h4M3.500 11.500h3" /><path d="M1 2.500h16" stroke-width="2" /><circle cx="12.800" cy="11.300" r="4.700" /><circle cx="12.800" cy="11.300" r="1.900" /></svg>
      <svg class="acc" width="19" height="19" viewBox="0 0 19 19" fill="none" stroke="#e5e5e5" stroke-width="1.200"><circle cx="8" cy="2.500" r="2" /><path d="M1.500 3c-1 1 0 2 1 2.500l3.500 2-.500 4L3 17c-.500 1.500 1.500 2 2 1l3-6 2 3M14.500 3c1 1 0 2-1 2.500L10 7.500l.500 3M2 3.200l4 2h4l4-2M11 11l7 7.500M18 11l-7 7.500" /></svg>
      <b v-fit="157">Acessibilidade: investigar</b>
      <div class="view on"><svg width="17" height="17" viewBox="0 0 17 17" fill="none" stroke="#f0f0f0" stroke-width="1.500"><path d="M1 1h15v15H1zM1 6h15M1 11h15M6 1v15M11 1v15" /></svg></div>
      <div class="view"><svg width="18" height="17" viewBox="0 0 18 17" fill="none" stroke="#f0f0f0" stroke-width="1.400"><path d="M1 1h16v15H1zM4.500 4h9v9.500h-9zM6.500 6.500h5M6.500 8.700h5M6.500 11h5" /></svg></div>
      <div class="view"><svg width="18" height="17" viewBox="0 0 18 17" fill="none" stroke="#f0f0f0" stroke-width="1.500"><path d="M1 1h16v15H1zM1 10.500h10V1M6 1v9.500" /></svg></div>
      <svg class="zoom" width="158" height="16" viewBox="1703 1009 158 16"><path d="M1704 1017h10M1720 1017.500h125M1851 1017h10M1856 1012v10" stroke="#dcdcdc" stroke-width="1.200" /><path d="M1780 1010h6v14h-6z" fill="#c8c8c8" /></svg>
      <span class="pc" v-fit="31">100%</span>
    </footer>
  </div>
</template>

<style>
html, body { margin: 0; background: #525252; overflow: hidden; }
</style>

<style scoped>
* { box-sizing: border-box; }
.app { width: 1920px; height: 1029px; overflow: hidden; background: #525252; color: #fff; font-family: "Open Sans", "Noto Sans", sans-serif; white-space: pre; display: flex; flex-direction: column; }
svg { display: block; flex: none; overflow: visible; }
p, h3, hr { margin: 0; }
hr { border: 0; width: 1px; height: 30px; background: #8a8a8a; }
button { font-family: inherit; border: 0; padding: 0; }

.titlebar { height: 60px; display: flex; align-items: center; flex: none; }
.xl { margin-left: 20px; }
.doc { display: flex; align-items: center; margin-left: 30px; width: 670px; font-size: 14.5px; height: 20px; }
.doc .dash { width: 22px; text-align: center; }
.doc .dot { width: 19px; text-align: center; }
.doc svg { margin-left: 6px; }
.search { width: 460px; height: 40px; margin-top: -1px; background: #bebebe; border-radius: 4px; border: 1px solid #8c8c8c; box-shadow: 0 0 3px #333; display: flex; align-items: center; padding-left: 16px; color: #555; font-size: 16px; gap: 16px; }
.search span { margin-top: -1px; }
.avatar { width: 30px; height: 30px; border-radius: 50%; background: #d13438; margin-left: 437px; display: flex; align-items: center; justify-content: center; font-size: 11.5px; }
.bulb { margin: -6px 0 0 36px; }
.wins { display: flex; gap: 46px; margin-left: 36px; }

.tabs { height: 38px; display: flex; flex: none; }
.tab { flex: none; height: 36px; padding-top: 8px; line-height: 24px; font-size: 16.5px; }
.tab.on { font-weight: 600; border-bottom: 3px solid #a0dab5; }
.cbtn { height: 30px; margin-top: 4px; border-radius: 4px; background: #bebebe; display: flex; align-items: center; color: #222; font-size: 16.5px; flex: none; }
.cbtn span { margin-top: -1px; }
.comments { margin-left: 443px; width: 132px; padding-left: 6px; gap: 5px; border: 1px solid #8f8f8f; }
.share { margin-left: 10px; width: 191px; background: #62ba84; padding-left: 6px; gap: 5px; }
.share svg:last-child { margin-left: 4px; }

.ribbon { margin: 0 10px; height: 124px; flex: none; border-radius: 9px; background: #bebebe; display: flex; color: #222; padding-top: 6px; box-shadow: 0 2px 4px #333; font-size: 14px; }
.group { height: 111px; border-right: 1px solid #8a8a8a; display: flex; flex-direction: column; flex: none; }
.group footer { height: 14px; margin-top: auto; margin-bottom: -2px; line-height: 14px; font-size: 12.5px; display: flex; justify-content: center; position: relative; }
.group footer.l { padding-right: 21px; }
.launcher { position: absolute; right: 3px; top: 1px; }
.body { display: flex; height: 92px; }
.body.two { flex-direction: column; padding: 8px 0 0 10px; gap: 9px; }
.row { display: grid; align-items: center; justify-items: center; height: 30px; }
.combo { width: 100%; height: 30px; border: 1px solid #777; border-radius: 4px; display: flex; align-items: center; justify-content: space-between; padding: 0 3px; font-size: 14.5px; color: #222; }
.clip { width: 161px; }
.clip footer { justify-content: flex-start; padding-left: 8px; }
.paste { width: 70px; margin-left: 17px; display: flex; flex-direction: column; align-items: center; padding-top: 4px; color: #8a8a8a; font-size: 14px; margin-right: -2px; }
.paste > svg:first-child { margin-left: 6px; }
.paste span { line-height: 20px; margin: 5px 0 6px; }
.clipcol { margin: -3px 0 0 0; }
.crow { height: 32px; display: flex; align-items: center; }
.clipcol .crow svg + svg { margin-left: 15px; }
.font { width: 292px; }
.f1 { grid-template-columns: 143px 63px 34px 33px; column-gap: 2px; }
.f1 > svg { margin-left: -3px; }
.f1 > svg:last-child { margin-left: -9px; }
.f2 { grid-template-columns: 30px 36px 28px 18px 8px 27px 21px 4px 32px 14px 40px 8px; margin-left: -1px; color: #505050; font-size: 17px; line-height: 20px; }
.f2 i { font-family: "Liberation Serif", serif; font-size: 18px; }
.f2 b { font-weight: 700; }
.f2 u { font-size: 16px; text-underline-offset: 3px; }
.align { width: 253px; }
.al { width: 167px; padding: 8px 0 0 9px; height: 85px; background: linear-gradient(#8a8a8a, #8a8a8a) right 7px / 1px 78px no-repeat; }
.a1 { grid-template-columns: 32px 32px 32px 32px 10px; justify-content: start; }
.a2 { grid-template-columns: repeat(5, 32px); justify-content: start; margin-top: 9px; }
.a3 { grid-template-columns: 44px 33px; justify-content: start; margin-bottom: 9px; }
.ar { padding: 8px 0 0 0; }
.al path { stroke: #505050; stroke-width: 1.5; fill: none; }
.al .up { margin-top: -8px; }
.al .pressed { width: 30px; height: 30px; border: 1px solid #777; border-radius: 5px; background: #cdcdcd; display: flex; align-items: flex-end; justify-content: center; padding-bottom: 3px; }
.gl { fill: #505050; font-family: "Liberation Sans", sans-serif; }
path.bl, .al path.bl { fill: none; stroke: #1162ab; stroke-width: 1.7; }
.num { width: 200px; }
.num .combo { width: 180px; }
.n2 { grid-template-columns: 30px 16px 40px 24px 11px 23px 41px; }
.pct { font-size: 23px; line-height: 26px; color: #606060; }
.zeros { font-size: 13px; color: #606060; }
.big { display: flex; flex-direction: column; align-items: center; height: 90px; flex: none; padding-bottom: 6px; }
.big > svg { margin: 7px 0 0; }
.big > span { margin-top: auto; line-height: 20px; }
.big p { line-height: 20px; height: 20px; display: flex; align-items: center; gap: 6px; }
.big > span, .big p { flex: none; }
.big > span:last-child { margin-bottom: 20px; }
.styles { width: 300px; }
.styles .body { padding-left: 9px; }
.b1 { width: 100px; } .b2 { width: 112px; } .b3 { width: 70px; }
.cells { width: 136px; }
.rows { margin-top: -3px; }
.cells .crow { display: grid; grid-template-columns: 25px 63px 12px; padding-left: 15px; }
.cells .crow > * { justify-self: start; }
.edit { width: 245px; }
.edit .rows { width: 64px; }
.edit .crow { padding-left: 15px; gap: 7px; }
.edit .crow.first { padding-left: 17px; gap: 15px; }
.e1 { width: 88px; } .e2 { width: 76px; }
.e1 > svg, .e2 > svg, .addin .big > svg, .copilot .big > svg { margin-top: 4px; }
.addin { width: 112px; } .addin .body, .copilot .body { justify-content: center; }
.copilot { width: 75px; }
.collapse { flex: 1; display: flex; justify-content: flex-end; padding: 97px 12px 0 0; }

.fbar { height: 49px; padding: 10px 10px 9px; display: flex; flex: none; }
.fbox { height: 30px; border: 1px solid #8a8a8a; border-radius: 5px; background: #4b4b4b; display: flex; align-items: center; }
.name { width: 127px; justify-content: space-between; padding: 0 6px; font-size: 15.5px; }
.dots { margin: 9px 11px 0 10px; }
.fx { width: 107px; padding-left: 7px; gap: 12px; }
.fx em { font-family: "Liberation Serif", serif; font-size: 23px; font-weight: 400; -webkit-text-stroke: .4px #d8d8d8; line-height: 24px; color: #d8d8d8; width: 18px; margin-right: -6px; }
.input { flex: 1; margin-left: 5px; justify-content: flex-end; padding-right: 4px; }

.work { display: flex; height: 692px; flex: none; }
.sheet { width: 1893px; background: #fff; border-left: 1px solid #444; overflow: hidden; position: relative; color: #000; flex: none; }
.cursor { position: absolute; left: 1197px; top: 333px; width: 83px; height: 27px; border: 2px solid #217346; }
.cursor::after { content: ""; position: absolute; right: -3px; bottom: -3px; width: 5px; height: 5px; background: #217346; border: solid #fff; border-width: 1px 0 0 1px; box-sizing: content-box; }
.line1 { display: flex; height: 59px; }
.banner { margin-left: 737px; width: 397px; background: #c1ebfb; display: flex; padding-left: 122px; font-size: 28.5px; font-weight: 600; line-height: 38px; padding-top: 6px; }
.banner svg { position: relative; margin: 3px 0 0 74px; }
.home { margin: -3px 0 0 675px; width: 72px; height: 50px; border-radius: 9px; background: #2f489e; border: 2px solid #1c2a5e; padding: 4px 0 0 16px; }
.line2 { display: flex; margin-top: 18px; height: 264px; position: relative; }
.kpi { width: 649px; height: 258px; margin-top: 2px; margin-left: -1px; border-radius: 42px; background: #0e79cc; border: 2px solid #172b66; color: #fff; display: flex; flex-direction: column; position: relative; }
.kpi svg { position: absolute; left: 554px; top: 14px; }
.kpi strong { font-size: 66px; font-weight: 600; line-height: 80px; margin: 23px auto 0 234px; -webkit-text-stroke: .6px #fff; }
.kpi p { display: flex; align-items: baseline; margin: 55px 0 0 61px; font-size: 20px; line-height: 30px; }
.kpi p span { font-size: 22px; font-weight: 600; -webkit-text-stroke: .3px #fff; }
.panel { border: 2px solid #1a2754; background: #fff; }
.panel h3 { background: #0e79cc; color: #fff; font-size: 22px; font-weight: 600; display: flex; line-height: 41px; }
.channel { width: 526px; margin-left: 63px; height: 264px; }
.channel h3 { height: 42px; padding-left: 72px; }
.bv, .bn { font-family: Lato, sans-serif; font-size: 13.5px; fill: #404040; }
.bn { fill: #595959; }
.top { width: 540px; height: 263px; margin: 1px 0 0 56px; }
.top h3 { height: 41px; padding-left: 12px; line-height: 39px; }
.table { margin: 21px 0 0 48px; width: 416px; font-family: Lato, sans-serif; font-size: 16.5px; }
.tr { display: grid; grid-template-columns: 96px 205px 115px; height: 24px; line-height: 26px; }
.tr .c1 { padding-left: 4px; } .tr .c2 { text-align: right; } .tr .c3 { text-align: right; padding-right: 4px; }
.tr .c2 > span, .tr .c3 > span, .tr .c1 > span { display: inline-block; }
.th { background: #0e79cc; color: #06131c; }
.th .c2 { text-align: left; } .th .c3 { text-align: left; padding-left: 13px; }
.th + .tr { background: #fcd9d3; height: 25px; } .th + .tr + .tr { margin-top: -1px; }
.line3 { display: flex; margin-top: 25px; position: relative; }
.trend { width: 1580px; height: 301px; border-left: 0; }
.trend h3 { height: 38px; line-height: 41px; padding-left: 616px; }
.lv { font-size: 13px; font-weight: 700; fill: #404040; }
.lm { font-size: 13px; fill: #595959; }
.side { margin: -1px 0 0 -1px; }
.slicer { width: 254px; height: 195px; border: 2px solid #1a2754; background: #fff; padding: 5px 9px 0 10px; }
.slicer header { height: 30px; border-bottom: 1px solid #4b66ca; display: flex; font-family: Lato, sans-serif; font-size: 16px; line-height: 24px; width: 230px; }
.slicer header svg:nth-of-type(1) { margin: 1px 0 0 139px; }
.slicer header svg:nth-of-type(2) { margin: 1px 0 0 17px; }
.sbody { display: flex; margin-top: 5px; height: 143px; overflow: hidden; }
.years { width: 208px; display: grid; grid-template-columns: 99px 99px; grid-auto-rows: 33px; gap: 4px; font-family: Lato, sans-serif; font-size: 17px; }
.years > span { border: 1px solid #bfbfbf; border-radius: 3px; padding-left: 10px; line-height: 31px; }
.years > span > span { display: inline-block; }
.years > .sel { background: #b8c0ea; border-color: #8c8c99; }
.sscroll { width: 22px; background: #f0f0f0; display: flex; flex-direction: column; align-items: center; padding-top: 8px; height: 142px; }
.sscroll div { width: 21px; height: 72px; background: #cdcdcd; margin: 9px 0 31px; }
.next { margin: 82px 0 0 238px; width: 62px; height: 45px; border-radius: 5px; background: #2f489e; border: 2px solid #1c2a5e; display: flex; align-items: center; justify-content: center; }
.vscroll { width: 20px; height: 697px; margin: -1px 0 0 4px; border-radius: 10px; background: #3a3a3a; display: flex; flex-direction: column; align-items: center; padding-top: 5px; position: relative; }
.vscroll div { width: 12px; height: 607px; border-radius: 6px; background: #c8c8c8; margin: 7px 0 53px; }

.sheets { height: 41px; border-bottom: 1px solid #3c3c3c; display: flex; flex: none; font-size: 16.5px; }
.nav1 { margin: 13px 0 0 32px; } .nav2 { margin: 13px 0 0 34px; }
.st { height: 24px; margin-top: 8px; line-height: 24px; border-right: 1px solid #777; flex: none; }
.s1 { margin-left: 78px; width: 119px; }
.active { margin-left: 5px; width: 114px; height: 34px; background: #fff; border-radius: 0 0 6px 6px; color: #1c1c1c; font-weight: 700; padding: 2px 10px 0; line-height: 28px; }
.active span { display: block; width: max-content; border-bottom: 2px solid #107c41; line-height: 28px; }
.s2 { margin-left: 4px; padding-left: 21px; width: 213px; }
.s3 { padding-left: 21px; width: 223px; }
.s4 { padding-left: 16px; width: 70px; }
.s5 { padding-left: 18px; width: 90px; }
.cut { width: 60px; overflow: hidden; padding-left: 20px; line-height: 24px; margin-top: 8px; height: 26px; flex: none; }
.more { margin: 16px 0 0 12px; } .plus { margin: 12px 0 0 24px; } .vd { margin: 13px 0 0 31px; }
.hscroll { margin: 9px 0 0 18px; width: 721px; height: 21px; border-radius: 10px; background: #3a3a3a; display: flex; align-items: center; padding-left: 6px; flex: none; }
.hscroll div { width: 615px; height: 12px; border-radius: 6px; background: #c8c8c8; margin: 0 70px 0 6px; }

.status { height: 25px; display: flex; align-items: center; flex: none; font-size: 12.5px; }
.ready { margin-left: 14px; font-size: 12px; }
.rec { margin: 0 0 0 25px; } .acc { margin: 0 3px 0 21px; }
.status b { width: 157px; font-weight: 700; }
.view { width: 50px; height: 25px; display: flex; align-items: center; justify-content: center; flex: none; }
.status .view.on { background: #636363; margin-left: 1249px; }
.zoom { margin: 0 0 0 7px; }
.pc { margin-left: 15px; }
</style>
